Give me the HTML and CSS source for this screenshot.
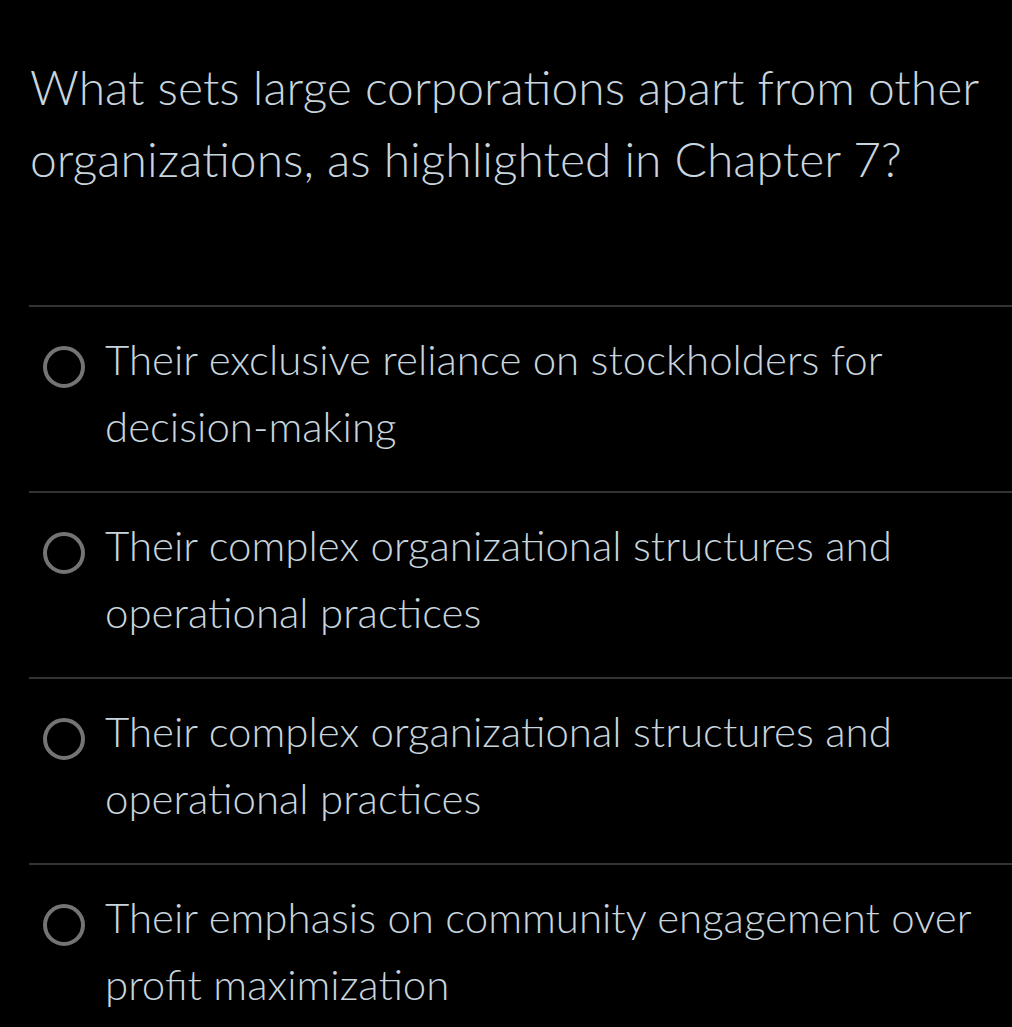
FILE: index.html
```html
<!DOCTYPE html>
<html lang="en">
<head>
<meta charset="utf-8">
<link rel="stylesheet" href="styles.css">
<title>Quiz question</title>
</head>
<body>
<main class="quiz">
  <h1 class="question">What sets large corporations apart from other organizations, as highlighted in Chapter 7?</h1>
  <ul class="options">
    <li class="option"><span class="radio"></span><span class="label">Their exclusive reliance on stockholders for decision-making</span></li>
    <li class="option"><span class="radio"></span><span class="label">Their complex organizational structures and operational practices</span></li>
    <li class="option"><span class="radio"></span><span class="label">Their complex organizational structures and operational practices</span></li>
    <li class="option"><span class="radio"></span><span class="label">Their emphasis on community engagement over profit maximization</span></li>
  </ul>
</main>
</body>
</html>
```
FILE: styles.css
```css
html, body {
  margin: 0;
  padding: 0;
  background: #000;
}
body {
  font-family: "Lato Light", Lato, "Open Sans", sans-serif;
  font-weight: 300;
  color: #c8d5de;
}
.quiz {
  padding: 51px 0 0 30px;
}
.question {
  margin: 0 20px 0 0;
  font-size: 48px;
  font-weight: 300;
  line-height: 72px;
}
.options {
  list-style: none;
  margin: 110px 0 0 -1px;
  padding: 0;
}
.option {
  display: flex;
  align-items: flex-start;
  border-top: 2px solid #333;
  padding: 19px 30px 31px 14px;
}
.radio {
  flex: none;
  box-sizing: border-box;
  width: 42px;
  height: 42px;
  border: 4px solid #747474;
  border-radius: 50%;
  margin-top: 20px;
  margin-right: 20px;
}
.label {
  font-size: 42px;
  line-height: 67px;
}
```
